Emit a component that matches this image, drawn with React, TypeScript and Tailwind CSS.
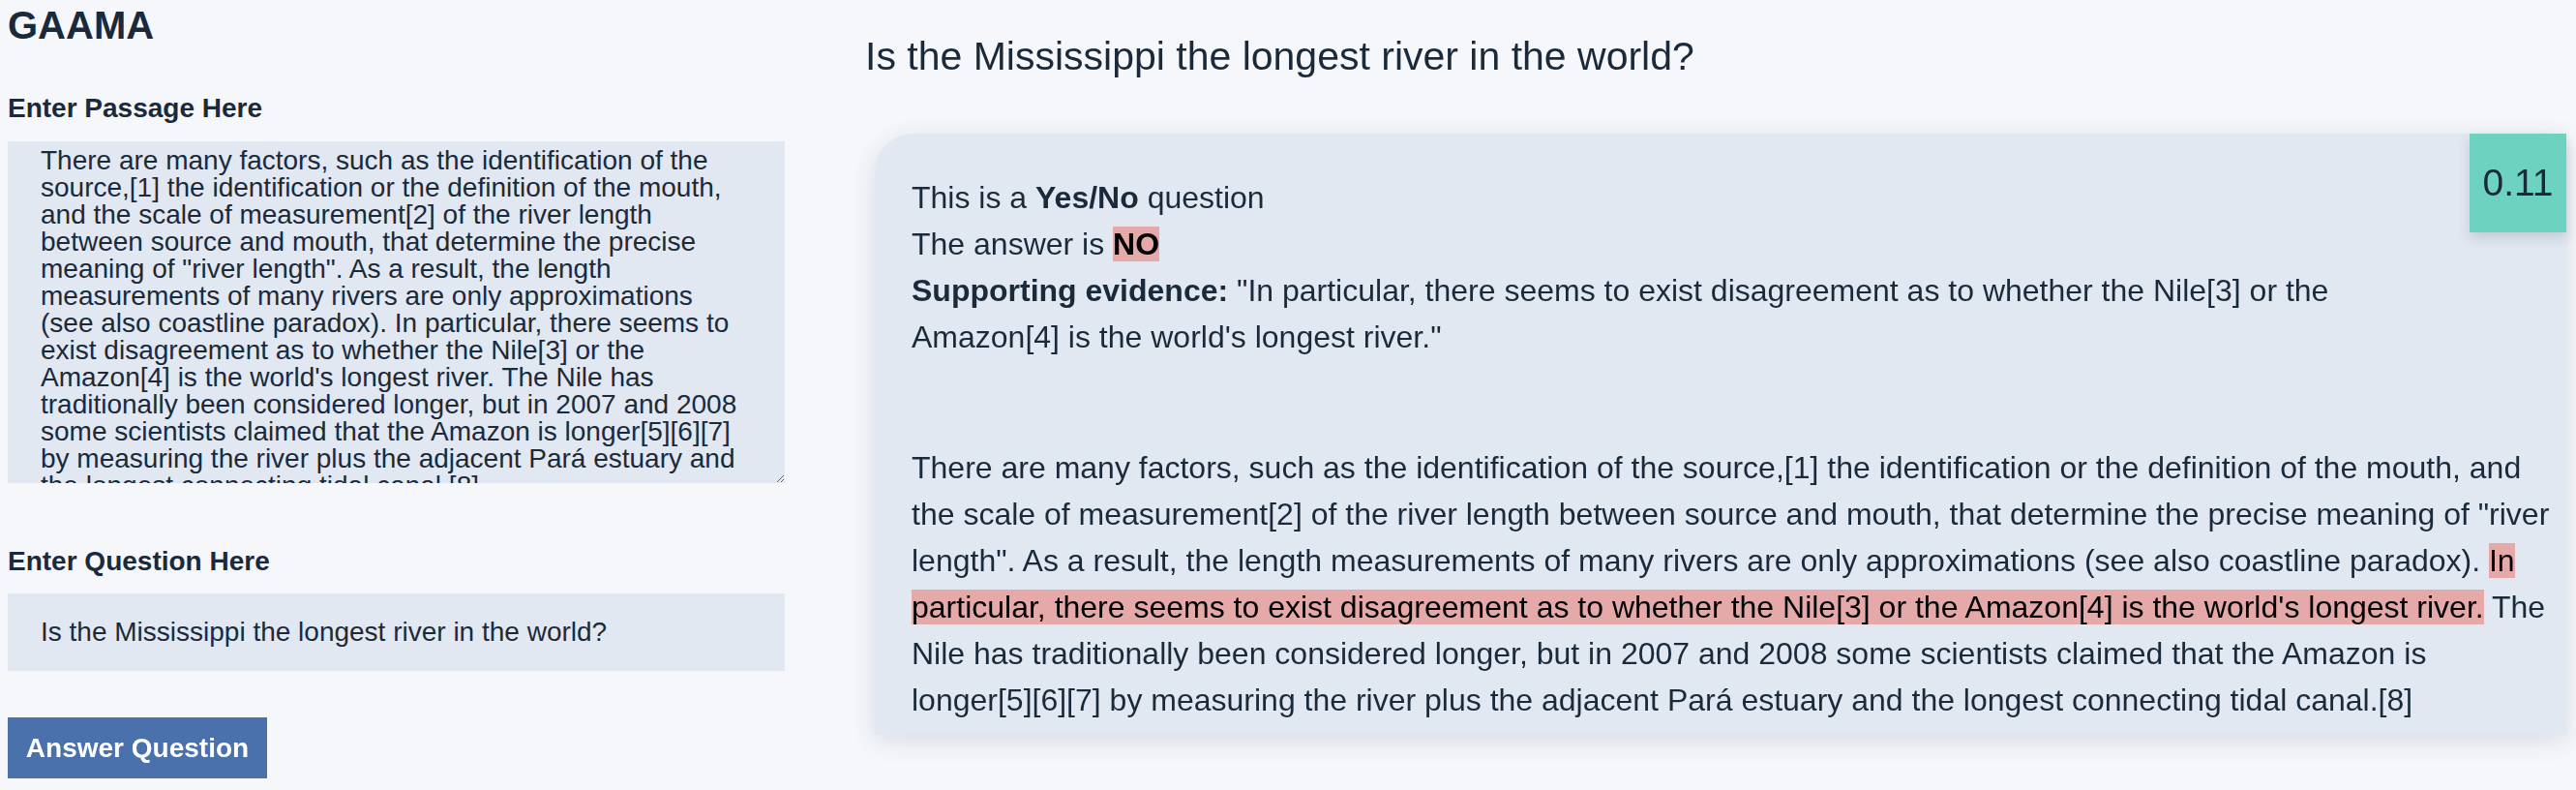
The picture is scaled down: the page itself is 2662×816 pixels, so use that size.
import React from 'react'

const PASSAGE_BEFORE =
    'There are many factors, such as the identification of the source,[1] the identification or the definition of the mouth, and the scale of measurement[2] of the river length between source and mouth, that determine the precise meaning of "river length". As a result, the length measurements of many rivers are only approximations (see also coastline paradox). '
const EVIDENCE =
    "In particular, there seems to exist disagreement as to whether the Nile[3] or the Amazon[4] is the world's longest river."
const AFTER_HEAD = ' The Nile has traditionally been considered longer, but in 2007 and 2008 some scientists claimed that the Amazon is '
const AFTER_CITE = 'longer[5][6][7]'
const AFTER_TAIL = ' by measuring the river plus the adjacent Pará estuary and the longest connecting tidal canal.[8]'

const QUESTION = 'Is the Mississippi the longest river in the world?'

export default function App() {
    return (
        <div className="min-h-screen flex bg-[#f5f7fb] text-[#1b2a3a] font-['Liberation_Sans',Arial,sans-serif]">
            {/* Left: inputs */}
            <div className="w-[803px] ml-[8px] shrink-0 flex flex-col">
                <h1 className="mt-[3px] text-[40px] leading-[46px] font-bold">GAAMA</h1>

                <label className="mt-[47px] text-[28px] leading-[32px] font-bold">Enter Passage Here</label>
                <textarea
                    className="mt-[18px] h-[353px] w-full bg-[#e1e8f2] pt-[6px] pl-[34px] pr-[38px] text-[28px] leading-[28px] outline-none [scrollbar-width:none]"
                    spellCheck={false}
                    defaultValue={PASSAGE_BEFORE + EVIDENCE + AFTER_HEAD + AFTER_CITE + AFTER_TAIL}
                />

                <label className="mt-[65px] text-[28px] leading-[32px] font-bold">Enter Question Here</label>
                <input
                    className="mt-[17px] h-[80px] w-full bg-[#e1e8f2] pl-[34px] text-[28px] outline-none"
                    defaultValue={QUESTION}
                />

                <button className="mt-[48px] self-start w-[268px] h-[63px] bg-[#4a71ab] text-white text-[28px] leading-[32px] font-bold">
                    Answer Question
                </button>
            </div>

            {/* Right: answer */}
            <div className="flex-1 ml-[83px] mr-[10px] flex flex-col">
                <h2 className="mt-[35px] text-[41px] leading-[47px]">{QUESTION}</h2>

                <div className="relative mt-[56px] ml-[10px] rounded-tl-[40px] bg-[#e1e8f2] pt-[42px] pl-[38px] pr-[4px] pb-[12px] shadow-[0_6px_26px_rgba(30,40,60,0.13)]">
                    <div className="absolute top-0 right-0 w-[100px] h-[102px] flex items-center justify-center bg-[#6dd3c0] text-[39px] shadow-[0_6px_12px_rgba(30,40,60,0.15)]">
                        0.11
                    </div>

                    <div className="mr-[96px] text-[32px] leading-[48px]">
                        <div>
                            This is a <b>Yes/No</b> question
                        </div>
                        <div>
                            The answer is <b className="bg-[#e6a9a9] text-black">NO</b>
                        </div>
                        <div>
                            <b>Supporting evidence:</b> "{EVIDENCE}"
                        </div>
                    </div>

                    <p className="mt-[87px] text-[32px] leading-[48px]">
                        {PASSAGE_BEFORE}
                        <span className="bg-[#e6a9a9] text-black">{EVIDENCE}</span>
                        {AFTER_HEAD}
                        <span className="whitespace-nowrap">{AFTER_CITE}</span>
                        {AFTER_TAIL}
                    </p>
                </div>
            </div>
        </div>
    )
}
